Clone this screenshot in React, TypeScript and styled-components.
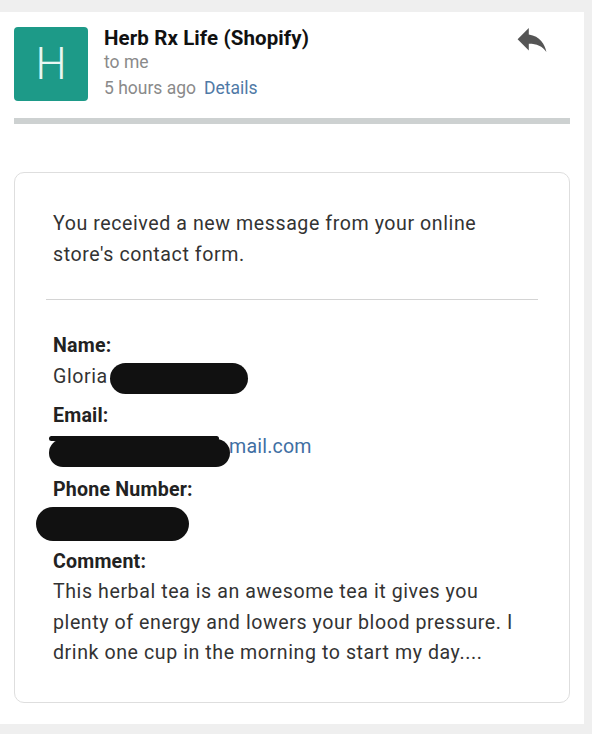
import React from "react";
import styled, { createGlobalStyle } from "styled-components";

const Global = createGlobalStyle`
  html, body { margin: 0; padding: 0; background: #efefef; }
  body { font-family: Roboto, "Noto Sans", "Liberation Sans", sans-serif; }
`;

const Page = styled.div`
  width: 592px;
  height: 734px;
  padding-top: 12px;
  box-sizing: border-box;
`;

const Panel = styled.div`
  width: 584px;
  height: 712px;
  background: #fff;
  box-sizing: border-box;
  padding: 15px 14px 0 14px;
`;

const Header = styled.div`
  display: flex;
  align-items: flex-start;
  height: 91px;
`;

const Avatar = styled.div`
  width: 74px;
  height: 74px;
  border-radius: 4px;
  background: #1d9a88;
  color: #e8f7f3;
  display: flex;
  align-items: center;
  justify-content: center;
  font-size: 44px;
  font-weight: 300;
  flex-shrink: 0;
`;

const Info = styled.div`
  margin-left: 16px;
  flex: 1;
  display: flex;
  flex-direction: column;
`;

const Sender = styled.div`
  font-size: 20.5px;
  font-weight: 700;
  color: #111;
  line-height: 22px;
  letter-spacing: 0.1px;
`;

const Meta = styled.div<{ $top?: number }>`
  font-size: 17.5px;
  color: #8a8a8a;
  line-height: 26px;
  margin-top: ${(p) => p.$top ?? 0}px;
`;

const Link = styled.span`
  color: #4f79a6;
  margin-left: 8px;
`;

const ReplyButton = styled.div`
  width: 32px;
  height: 24px;
  margin-right: 22px;
  margin-top: 1px;
  color: #555;
`;

const Rule = styled.div`
  height: 6px;
  background: #cdd1d1;
`;

const Card = styled.div`
  margin-top: 48px;
  border: 1.5px solid #dedede;
  border-radius: 10px;
  padding: 36px 31px 33px 31px;
  color: #333;
  font-size: 19.6px;
  letter-spacing: 0.57px;
  line-height: 30.5px;
`;

const Intro = styled.p`
  margin: 0;
  padding: 0 7px;
`;

const Divider = styled.hr`
  border: none;
  border-top: 1.5px solid #d4d4d4;
  margin: 29px 0 31px;
`;

const Fields = styled.div`
  padding: 0 7px;
  display: flex;
  flex-direction: column;
`;

const Field = styled.div<{ $gap?: number }>`
  margin-bottom: ${(p) => p.$gap ?? 9}px;
`;

const Label = styled.div`
  font-weight: 700;
  color: #222;
  letter-spacing: 0.2px;
`;

const Value = styled.div<{ $h?: number }>`
  position: relative;
  height: ${(p) => (p.$h ? `${p.$h}px` : "auto")};
`;

const EmailTail = styled.span`
  color: #3f6fa3;
  margin-left: 176px;
  letter-spacing: 0.2px;
`;

const Blob = styled.div<{ $l: number; $t: number; $w: number; $h: number }>`
  position: absolute;
  left: ${(p) => p.$l}px;
  top: ${(p) => p.$t}px;
  width: ${(p) => p.$w}px;
  height: ${(p) => p.$h}px;
  background: #111;
  border-radius: ${(p) => p.$h / 2}px;
`;

export default function App() {
  return (
    <Page>
      <Global />
      <Panel>
        <Header>
          <Avatar>H</Avatar>
          <Info>
            <Sender>Herb Rx Life (Shopify)</Sender>
            <Meta $top={0}>to me</Meta>
            <Meta $top={0}>
              5 hours ago<Link>Details</Link>
            </Meta>
          </Info>
          <ReplyButton>
            <svg viewBox="3 5 18 15" width="32" height="24" fill="currentColor">
              <path d="M10 9V5l-7 7 7 7v-4.1c5 0 8.5 1.6 11 5.1-1-5-4-10-11-11z" />
            </svg>
          </ReplyButton>
        </Header>
        <Rule />
        <Card>
          <Intro>
            You received a new message from your online store's contact form.
          </Intro>
          <Divider />
          <Fields>
            <Field>
              <Label>Name:</Label>
              <Value>
                Gloria
                <Blob $l={57} $t={1} $w={138} $h={31} />
              </Value>
            </Field>
            <Field $gap={13}>
              <Label>Email:</Label>
              <Value>
                <EmailTail>mail.com</EmailTail>
                <Blob $l={-4} $t={4} $w={170} $h={5} />
                <Blob $l={-4} $t={7} $w={181} $h={28} />
              </Value>
            </Field>
            <Field $gap={9}>
              <Label>Phone Number:</Label>
              <Value $h={32}>
                <Blob $l={-17} $t={1} $w={153} $h={34} />
              </Value>
            </Field>
            <Field $gap={0}>
              <Label>Comment:</Label>
              <Value>
                This herbal tea is an awesome tea it gives you plenty of energy
                and lowers your blood pressure. I drink one cup in the morning to
                start my day....
              </Value>
            </Field>
          </Fields>
        </Card>
      </Panel>
    </Page>
  );
}
